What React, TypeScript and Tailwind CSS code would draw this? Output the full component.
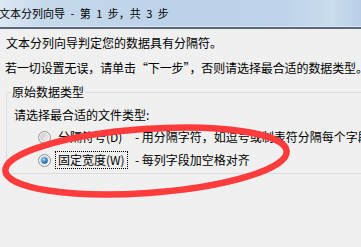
import React from 'react';

const font = { fontFamily: '"Microsoft YaHei", "Noto Sans CJK SC", sans-serif' };

const Radio = ({ checked }: { checked?: boolean }) => (
  <svg width="13" height="13" viewBox="0 0 13 13" className="shrink-0">
    <defs>
      <linearGradient id={checked ? 'rg-on' : 'rg-off'} x1="0" y1="0" x2="1" y2="1">
        <stop offset="0" stopColor="#c9c9c9" />
        <stop offset="1" stopColor="#f4f4f4" />
      </linearGradient>
      <radialGradient id="dot" cx="0.4" cy="0.35" r="0.7">
        <stop offset="0" stopColor="#b9e3ff" />
        <stop offset="0.45" stopColor="#3f9be0" />
        <stop offset="1" stopColor="#17497a" />
      </radialGradient>
    </defs>
    <circle cx="6.5" cy="6.5" r="6" fill="#f6f6f6" stroke="#8f8f8f" strokeWidth="1" />
    <circle cx="6.5" cy="6.5" r="4.5" fill={`url(#${checked ? 'rg-on' : 'rg-off'})`} />
    {checked && <circle cx="6.5" cy="6.5" r="3.2" fill="url(#dot)" />}
  </svg>
);

const Option = ({ label, desc, checked }: { label: string; desc: string; checked?: boolean }) => (
  <div className="flex items-center h-[20px] pl-[24px]">
    <Radio checked={checked} />
    <div className="w-[84px] pl-[4px]">
      <span
        className={`inline-block px-[2px] leading-[16px] border border-dotted ${
          checked ? 'border-black' : 'border-transparent'
        }`}
      >
        {label}
      </span>
    </div>
    <span className="whitespace-nowrap">{desc}</span>
  </div>
);

export default function App() {
  return (
    <div
      className="relative w-[361px] h-[247px] overflow-hidden bg-[#f0f0f0] text-black text-[12px]"
      style={font}
    >
      {/* title bar */}
      <div className="h-[29px] flex flex-col">
        <div className="flex-1 flex items-center bg-[linear-gradient(90deg,#dde8f4_0%,#c6d9ec_12%,#bcd2e9_50%,#bfd4ea_80%,#cadcee_92%,#b8cee6_100%)]">
          <span className="-ml-px text-[11px] whitespace-nowrap [word-spacing:3px]">
            文本分列向导 - 第 1 步，共 3 步
          </span>
        </div>
        <div className="h-px bg-[#dbe7f2]" />
        <div className="h-[2px] bg-[#5a6979]" />
      </div>

      <div className="pl-[5px] pt-[6px]">
        <div className="leading-[16px] pl-px">文本分列向导判定您的数据具有分隔符。</div>
        <div className="mt-[9px] leading-[16px] whitespace-nowrap tracking-[-0.1px]">
          若一切设置无误，请单击“下一步”，否则请选择最合适的数据类型。
        </div>
      </div>

      <fieldset className="mt-[8px] ml-[6px] w-[400px] border border-[#d5dfe5] rounded-[3px] pb-[3px] pl-[7px]">
        <legend className="ml-[-3px] px-[1px] leading-[16px]">原始数据类型</legend>
        <div className="mt-[7px] leading-[16px]">请选择最合适的文件类型:</div>
        <div className="mt-[4px] flex flex-col gap-[3px]">
          <Option label="分隔符号(D)" desc="- 用分隔字符，如逗号或制表符分隔每个字段" />
          <Option label="固定宽度(W)" desc="- 每列字段加空格对齐" checked />
        </div>
      </fieldset>

      {/* red hand-drawn ellipse */}
      <svg
        className="absolute inset-0 pointer-events-none"
        width="361"
        height="247"
        viewBox="0 0 361 247"
      >
        <ellipse
          cx="146"
          cy="161"
          rx="141"
          ry="32"
          transform="rotate(-4 146 161)"
          fill="none"
          stroke="#ff3b3b"
          strokeWidth="6.5"
        />
      </svg>
    </div>
  );
}
